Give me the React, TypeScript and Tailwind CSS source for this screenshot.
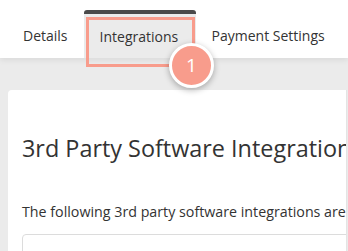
export default function App() {
  return (
    <div className="relative w-[348px] h-[251px] overflow-hidden bg-[#ebebeb] font-['Open_Sans',sans-serif] text-[#333]">
      {/* barra de pestañas */}
      <div className="flex h-[58px] items-end bg-white pl-[7px] shadow-[0_2px_6px_rgba(0,0,0,0.08)]">
        <div className="flex h-[48px] items-center px-4 pt-[3px] text-[14px]">Details</div>
        <div className="flex h-[48px] w-[112px] items-center rounded-t-[3px] border-t-[4px] border-[#4a4a4a] bg-[#ebebeb] px-4 text-[14px]">
          Integrations
        </div>
        <div className="flex h-[48px] items-center whitespace-nowrap px-4 pt-[3px] text-[14px]">Payment Settings</div>
      </div>

      {/* tarjeta */}
      <div className="ml-[8px] mt-[32px] h-[200px] w-[339px] overflow-hidden rounded-tl-[4px] border-r border-[#e4e4e4] bg-white px-[14px] pt-[42px]">
        <h1 className="whitespace-nowrap text-[23.4px] leading-[32px]">3rd Party Software Integrations</h1>
        <p className="mt-[38px] whitespace-nowrap text-[14.25px] leading-[20px]">
          The following 3rd party software integrations are available
        </p>
        <div className="mt-[12px] h-[40px] w-[400px] rounded-[4px] border border-[#dcdcdc]" />
      </div>

      {/* resaltado */}
      <div className="absolute left-[86px] top-[17px] h-[50px] w-[109px] border-[3px] border-[#f89c8c]" />
      <div className="absolute left-[169px] top-[43px] flex h-[45px] w-[45px] items-center justify-center rounded-full border-[3px] border-white bg-[#f89c8c] text-[19px] font-medium text-white shadow-[0_2px_6px_rgba(0,0,0,0.3)]">
        1
      </div>
    </div>
  );
}
